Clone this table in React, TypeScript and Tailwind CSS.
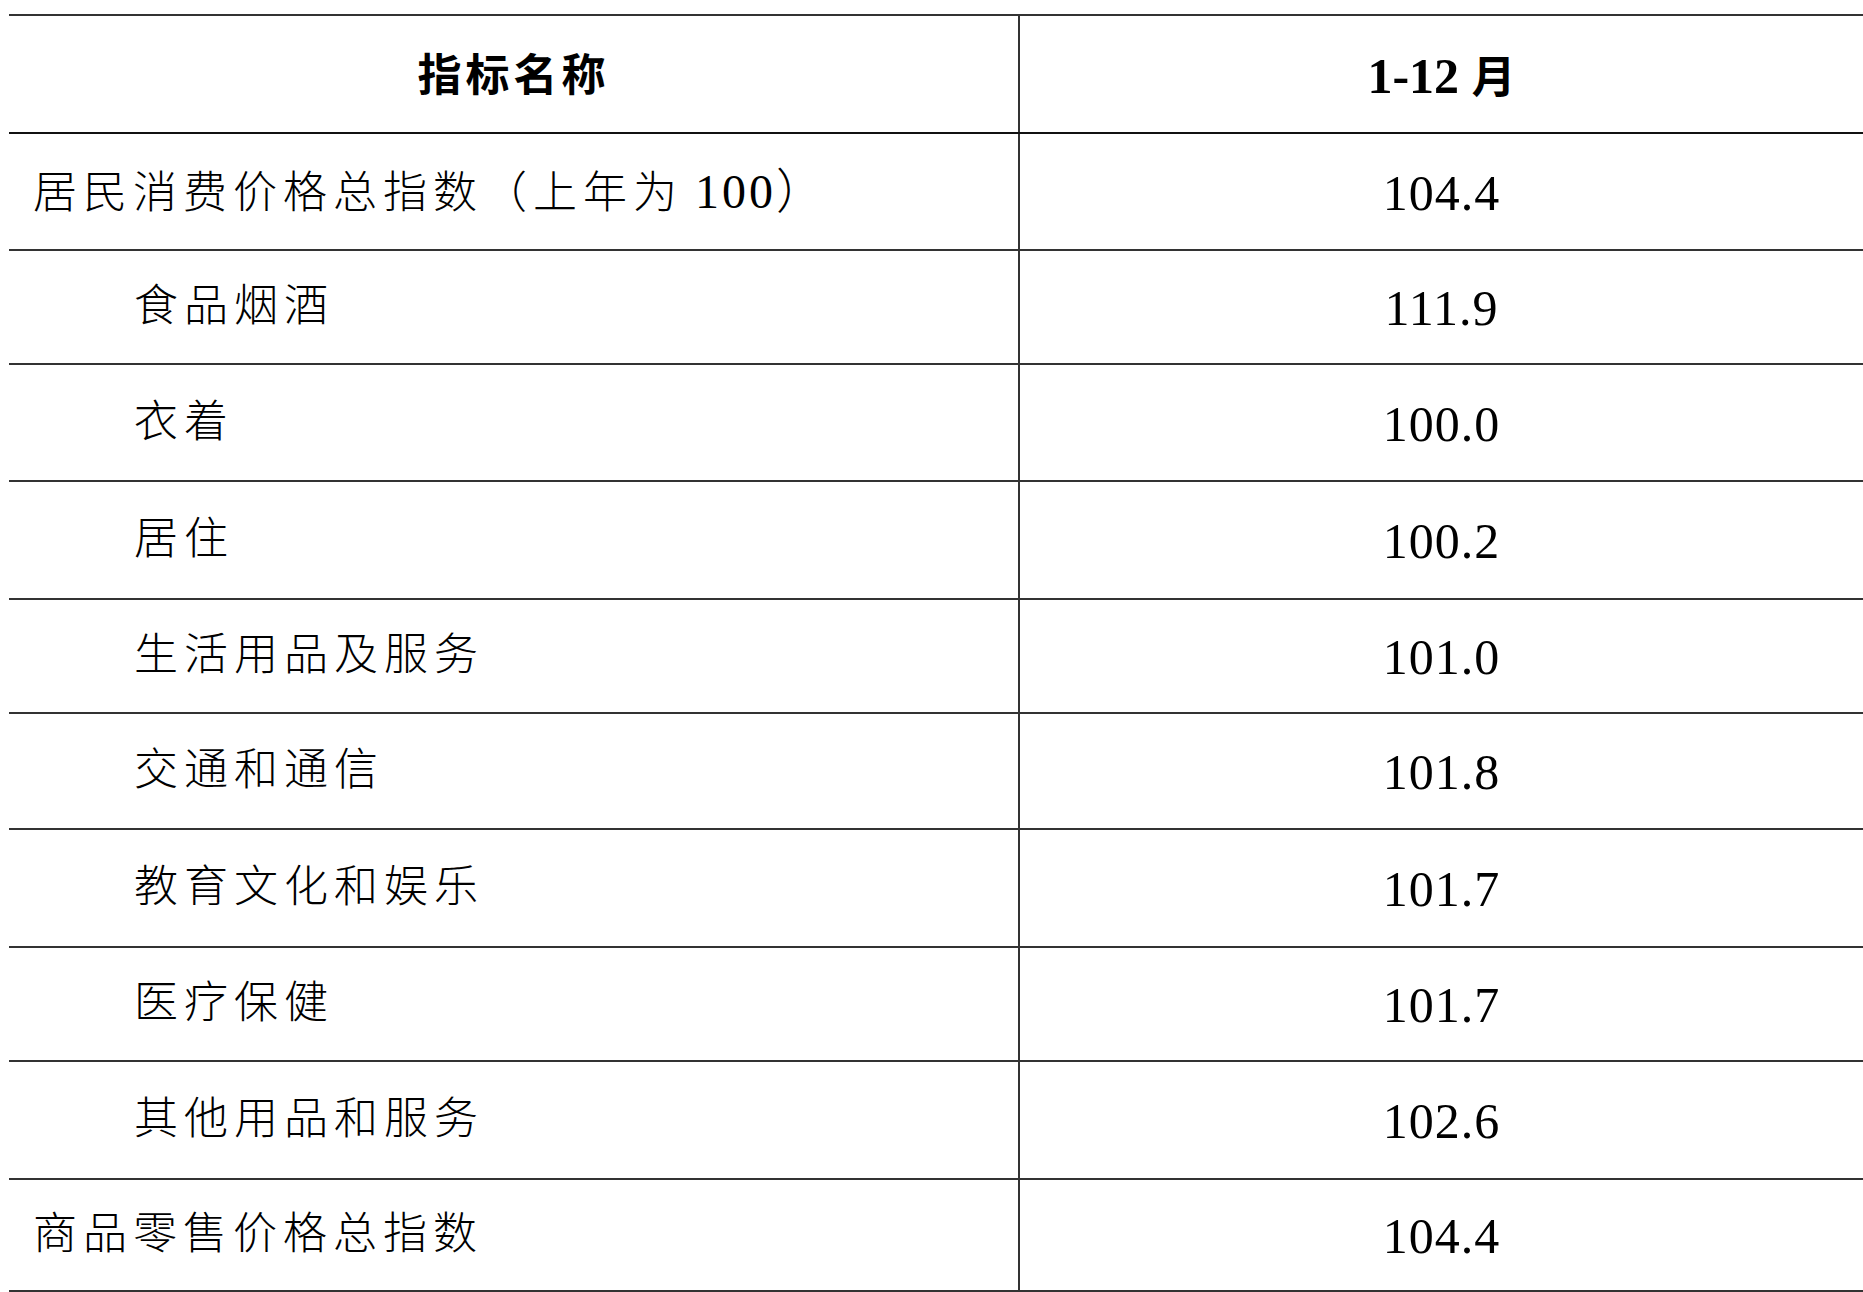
import React from 'react';

const rows = [
  { name: '居民消费价格总指数（上年为', tail: '100）', value: '104.4', indent: false, h: 'h-[117px]' },
  { name: '食品烟酒', value: '111.9', indent: true, h: 'h-[114px]' },
  { name: '衣着', value: '100.0', indent: true, h: 'h-[117px]' },
  { name: '居住', value: '100.2', indent: true, h: 'h-[118px]' },
  { name: '生活用品及服务', value: '101.0', indent: true, h: 'h-[114px]' },
  { name: '交通和通信', value: '101.8', indent: true, h: 'h-[116px]' },
  { name: '教育文化和娱乐', value: '101.7', indent: true, h: 'h-[118px]' },
  { name: '医疗保健', value: '101.7', indent: true, h: 'h-[114px]' },
  { name: '其他用品和服务', value: '102.6', indent: true, h: 'h-[118px]' },
  { name: '商品零售价格总指数', value: '104.4', indent: false, h: 'h-[112px]' },
];

const App: React.FC = () => {
  return (
    <div className="min-h-screen bg-white pt-[14px] pl-[9px] text-black font-['Liberation_Serif','Noto_Sans_CJK_SC',serif]">
      <div className="border-t-2 border-[#333]">
        {/* header */}
        <div className="flex h-[118px] border-b-2 border-[#111]">
          <div className="w-[1011px] border-r-2 border-[#333] flex items-center justify-center pt-[6px]">
            <span className="text-[44px] font-bold tracking-[4px]">指标名称</span>
          </div>
          <div className="flex-1 flex items-center justify-center pt-[4px]">
            <span className="text-[50px] font-bold">
              1-12 <span className="text-[44px]">月</span>
            </span>
          </div>
        </div>

        {rows.map((row, i) => (
          <div key={i} className={`flex ${row.h} border-b-2 border-[#333]`}>
            <div
              className={`w-[1011px] border-r-2 border-[#333] flex items-center ${row.indent ? 'pl-[125px]' : 'pl-[24px]'}`}
            >
              <span className="text-[44px] font-light tracking-[6px] whitespace-nowrap">
                {row.name}
                {row.tail && <span className="text-[48px] tracking-[3px] ml-[12px]">{row.tail}</span>}
              </span>
            </div>
            <div className="flex-1 flex items-center justify-center pt-[3px]">
              <span className="text-[50px] tracking-[1px]">{row.value}</span>
            </div>
          </div>
        ))}
      </div>
    </div>
  );
};

export default App;
